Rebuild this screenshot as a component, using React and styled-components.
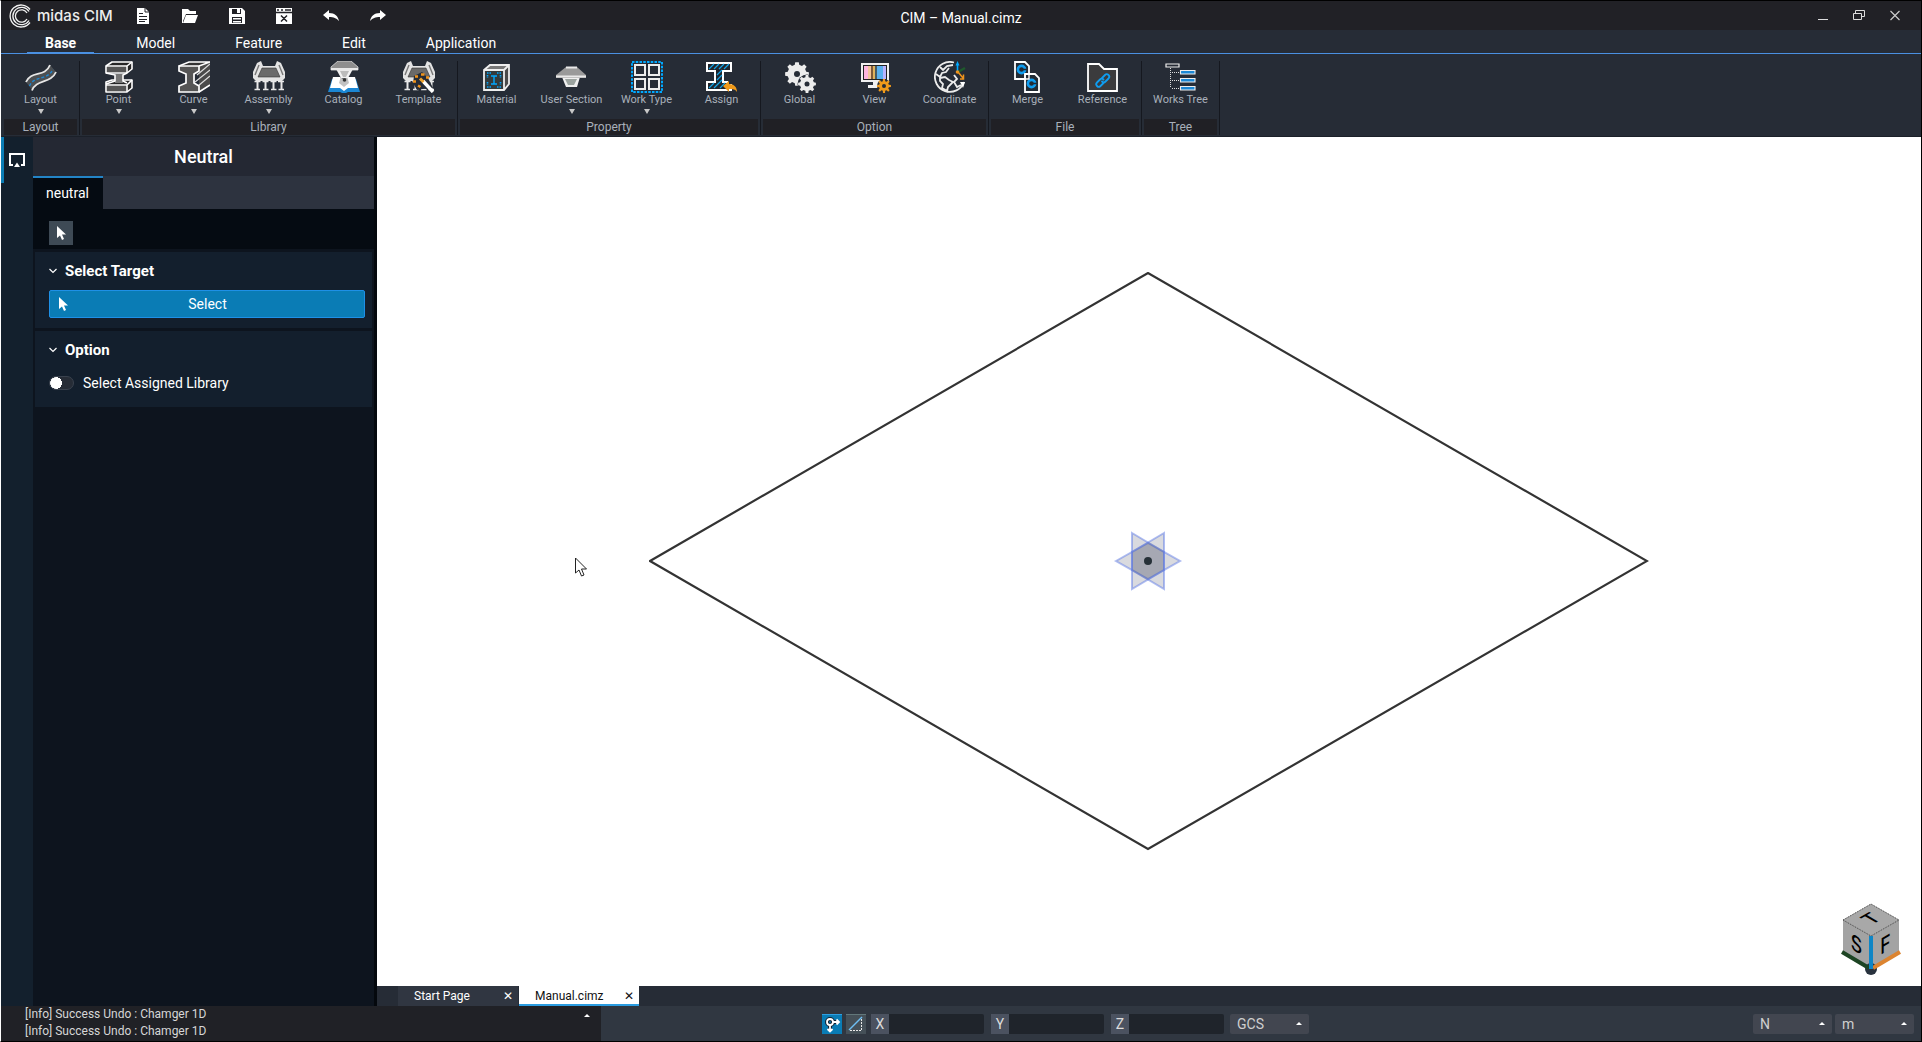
import React, { useState } from "react";
import styled, { createGlobalStyle } from "styled-components";

function gearPath(cx, cy, outer, inner, teeth) {
  const step = (Math.PI * 2) / teeth;
  const points = [];
  for (let i = 0; i < teeth; i++) {
    const a = i * step - Math.PI / 2;
    [
      [-0.3, inner],
      [-0.19, outer],
      [0.19, outer],
      [0.3, inner],
    ].forEach(([offset, r]) => {
      const t = a + offset * step;
      points.push(
        `${(cx + r * Math.cos(t)).toFixed(2)} ${(cy + r * Math.sin(t)).toFixed(2)}`
      );
    });
  }
  return `M${points.join("L")}Z`;
}

function Gear({ cx, cy, outer, inner, hole, teeth = 8, color }) {
  return (
    <>
      <path d={gearPath(cx, cy, outer, inner, teeth)} fill={color} />
      <circle cx={cx} cy={cy} r={hole} fill="#262c36" />
    </>
  );
}

// RIBBON DRAWINGS
function Deck() {
  return (
    <g>
      <path
        d="M0 11L4 2L8 0L10 5H22L24 0L28 2L32 11V17L29 20H3L0 17Z"
        fill="#e4e4e4"
      />
      <path d="M9 7H23L27 16H5Z" fill="#6a6a6a" stroke="#333" strokeWidth="0.6" />
      <path d="M6 4L2 14M26 4L30 14" stroke="#777" strokeWidth="1.4" />
      <path
        d="M4.5 20V28M12.5 20V28M20.5 20V28M28.5 20V28"
        stroke="#e8e8e8"
        strokeWidth="2"
      />
      <path
        d="M1.5 20.5H7.5M9.5 20.5H15.5M17.5 20.5H23.5M25 20.5H31M1.5 28.5H7M10 28.5H15.5M18 28.5H23.5M25.5 28.5H31"
        stroke="#e8e8e8"
        strokeWidth="1.4"
      />
    </g>
  );
}

const drawings = {
  layout: (
    <>
      <path d="M1 21C6 9 20 17 25 4L31 11C26 23 11 18 7 29Z" fill="#4c4f52" />
      <path
        d="M4.5 25C9 14 23 20 28 8"
        fill="none"
        stroke="#1f86cf"
        strokeWidth="1.4"
        strokeDasharray="3 2"
      />
      <path
        d="M1 21C6 9 20 17 25 4M7 29.500C11 18 26 23 31 11"
        fill="none"
        stroke="#e6e6e6"
        strokeWidth="1.8"
      />
    </>
  ),
  point: (
    <g stroke="#fff" strokeWidth="1.6" strokeLinejoin="round">
      <path d="M3 5L9 1H29V8L24 12H3Z" fill="#262626" />
      <path d="M3 21L9 19H29V27L24 31H3Z" fill="#262626" />
      <path d="M3 5H24L29 1M24 5V12" fill="none" />
      <path d="M3 24H24L29 19M24 24V31" fill="none" />
      <path d="M12 13H20V22H12Z" fill="#777" stroke="none" />
      <path d="M3 12L12 14V20L3 23M24 12L20 14V20L24 22" fill="none" />
      <path d="M4 6H23V11H4ZM4 25H23V30H4Z" fill="#555" stroke="none" />
    </g>
  ),
  curve: (
    <>
      <path d="M21 5L32 0V24L21 31Z" fill="#4a4a4a" />
      <path d="M1 5L11 1H32L21 5Z" fill="#333" />
      <path d="M19 14L32 3M17 21L32 9M20 25L32 15" stroke="#ddd" strokeWidth="1.2" />
      <path
        d="M1 5H21V10L16 13V22L21 25V31H1V25L8 22V13L1 10Z"
        fill="#555"
        stroke="#fff"
        strokeWidth="1.7"
      />
      <path d="M1 5L11 1H32M21 5L32 1M21 31L32 24" fill="none" stroke="#fff" strokeWidth="1.5" />
    </>
  ),
  assembly: <Deck />,
  catalog: (
    <>
      <path d="M4 18H28L32 31H20L16 33L12 31H0Z" fill="#1b87d4" />
      <path d="M5 16H12L16 19L20 16H27L30 27H20L16 30L12 27H2Z" fill="#fff" />
      <path d="M13 15H19L21 22L16 26L11 22Z" fill="#999" opacity="0.6" />
      <path d="M8 8H25L20 17H13Z" fill="#f2f2f2" />
      <path d="M12 10H21L18 16H15Z" fill="#bbb" />
      <path d="M10 0H23L30 6V9H3V6Z" fill="#8e8e8e" stroke="#ddd" strokeWidth="0.8" />
      <path d="M3 7H30V9H3Z" fill="#e8e8e8" />
      <circle cx="16.5" cy="19" r="1.8" fill="#333" />
    </>
  ),
  template: (
    <>
      <Deck />
      <path d="M11 15L19 11L25 17L30 27L20 28L14 29L10 22Z" fill="#262c36" />
      <path d="M20 20L30 31" stroke="#fff" strokeWidth="3.4" />
      <path d="M17 17.5L20.5 21" stroke="#f0a22a" strokeWidth="3" />
      <path
        d="M18 13.5H21.5M23 16.5H26M12 15.5H15M10 20.5H13M15 24.5L17.5 26"
        stroke="#f0941d"
        strokeWidth="2.6"
      />
    </>
  ),
  material: (
    <>
      <path d="M3 9L9 3H28V23L23 29H3Z" fill="#4a4a4a" />
      <path d="M3 9L9 3H28L23 9Z" fill="#777" />
      <path d="M3 9H23V29H3Z" fill="#333a3c" />
      <path
        d="M3 9L9 4H28V23L23 29H3ZM3 9H23V29M23 9L28 4"
        fill="none"
        stroke="#eee"
        strokeWidth="1.8"
      />
      <path
        d="M6 12H10M16 12H20M6 26H10M16 26H20M6.5 14V17M19.5 14V17M6.5 21V24M19.5 21V24"
        stroke="#00a8ff"
        strokeWidth="1.6"
        strokeDasharray="1.5 1"
      />
      <path d="M10 15H16M13 15V23M10 23H16" stroke="#00a8ff" strokeWidth="1.4" />
    </>
  ),
  section: (
    <>
      <path d="M6 16H24L21 26H10Z" fill="#efefef" />
      <path d="M9 18H21L18 24H12Z" fill="#9ba39f" />
      <path d="M10 6H21L30 14V17H0V14Z" fill="#9a9a9a" />
      <path d="M10 6.5H21M0 15.5H30" stroke="#e9e9e9" strokeWidth="2" />
    </>
  ),
  workType: (
    <g fill="none">
      <path d="M1 1H31V31H1Z" stroke="#00a8ff" strokeWidth="2" strokeDasharray="2.5 1.25" />
      <path
        d="M4 4H14V14H4ZM18 4H28V14H18ZM4 18H14V28H4ZM18 18H28V28H18Z"
        stroke="#ececec"
        strokeWidth="2"
      />
    </g>
  ),
  assign: (
    <>
      <path
        d="M1 2H25V10H17V21H25V29H1V21H9V10H1Z"
        fill="#20262d"
        stroke="#fff"
        strokeWidth="2"
      />
      <path
        d="M3 8L8 3M8 8L13 3M13 8L18 3M18 8L23 3M11 14L16 9M11 19L16 14M3 27L8 22M8 27L16 19M14 27L19 22"
        stroke="#12a5e8"
        strokeWidth="1.2"
      />
      <path d="M22 18H27V23H22Z" fill="#262c36" />
      <path
        d="M17 25L23 20V23C28 23 31 26 31 31C29 28 27 28 23 28V31Z"
        fill="#f09a1a"
      />
    </>
  ),
  global: (
    <>
      <Gear cx={13} cy={13} outer={12} inner={9.5} hole={3} color="#ececec" />
      <circle cx="23" cy="23" r="9.5" fill="#262c36" />
      <Gear cx={23} cy={23} outer={9} inner={7} hole={2.5} color="#ececec" />
    </>
  ),
  view: (
    <>
      <path d="M2 2H30V21H20V24H23V27H9V24H14V21H2Z" fill="#f0f0f0" />
      <path d="M4 4H28V19H4Z" fill="#222" />
      <path d="M5 5H9V18H5Z" fill="#ffb6df" />
      <path d="M9 5H12V18H9Z" fill="#f3c59b" />
      <path d="M12 5H14V18H12Z" fill="#7d5a3a" />
      <path d="M14 5H16V18H14Z" fill="#e0b35c" />
      <path d="M16 5H18V18H16Z" fill="#465b63" />
      <path d="M18 5H24V18H18Z" fill="#5ab0ee" />
      <path d="M24 5H27V18H24Z" fill="#b7b3ff" />
      <circle cx="25" cy="25" r="7" fill="#262c36" />
      <Gear cx={25} cy={25} outer={7} inner={5} hole={2} color="#f09a1a" />
    </>
  ),
  coordinate: (
    <>
      <path
        d="M20 1.5A15 15 0 1 0 30 21"
        fill="none"
        stroke="#ececec"
        strokeWidth="1.8"
      />
      <path
        d="M6 6L9 9L13 5L19 4M15 7L12 11L8 12L6 16L2 13M6 17L11 16L15 19L19 21L14 26L13 30L8 27L9 23L6 20ZM20 14L23 18L20 21L23 26L27 24"
        fill="none"
        stroke="#ececec"
        strokeWidth="1.8"
      />
      <path d="M26 21H31L29 27Z" fill="#fff" />
      <path d="M23.5 11V3" stroke="#00a8ff" strokeWidth="1.6" />
      <path d="M21.5 4.5L23.5 0L25.5 4.5Z" fill="#00a8ff" />
      <path d="M24 11L31 7" stroke="#1e5a2c" strokeWidth="2.4" />
      <path d="M24 11L29 17M29.5 13.5V18H26" stroke="#f0941d" strokeWidth="1.5" fill="none" />
      <circle cx="23.5" cy="11" r="1.8" fill="#f0941d" />
    </>
  ),
  merge: (
    <>
      <path d="M3 1H13L17 5V18H3Z" fill="#222b34" stroke="#fff" strokeWidth="1.8" />
      <path d="M13 13H23L27 17V31H13Z" fill="#222b34" stroke="#fff" strokeWidth="1.8" />
      <g fill="none" stroke="#0f9df0" strokeWidth="2.6">
        <circle cx="9.5" cy="8.5" r="3.6" />
        <circle cx="19.5" cy="22.5" r="3.6" />
      </g>
      <path d="M10 8.5H15M20 22.5H25" stroke="#222b34" strokeWidth="1.4" />
      <path d="M13 13H17V18H13Z" fill="none" stroke="#fff" strokeWidth="1.4" />
    </>
  ),
  reference: (
    <>
      <path d="M1 3H12L17 8H30V30H1Z" fill="#3b3b3d" stroke="#fff" strokeWidth="1.8" />
      <g fill="none" stroke="#0f9df0" strokeWidth="1.8" strokeLinecap="round">
        <path d="M15 17L18 14C19 13 20.5 13 21.5 14C22.5 15 22.5 16.5 21.5 17.5L18.5 20.5C17.5 21.5 16 21.5 15 20.5" />
        <path d="M16.5 22L13.5 25C12.5 26 11 26 10 25C9 24 9 22.5 10 21.5L13 18.5C14 17.5 15.5 17.5 16.5 18.5" />
      </g>
    </>
  ),
  tree: (
    <>
      <path d="M1 3H14V6H1Z" fill="none" stroke="#eee" strokeWidth="1.2" />
      <path
        d="M5.5 7V27M7 11.5H14M7 19.5H14M7 27.5H14"
        stroke="#ddd"
        strokeDasharray="1 1"
      />
      <path
        d="M15.5 9.5H30V13H15.5ZM15.5 17.5H30V21H15.5ZM15.5 25.5H30V29H15.5Z"
        fill="#1b87d4"
        stroke="#eee"
        strokeWidth="1.1"
      />
    </>
  ),
};

const groups = [
  { name: "Layout", tools: [["Layout", "layout", true]] },
  {
    name: "Library",
    tools: [
      ["Point", "point", true],
      ["Curve", "curve", true],
      ["Assembly", "assembly", true],
      ["Catalog", "catalog"],
      ["Template", "template"],
    ],
  },
  {
    name: "Property",
    tools: [
      ["Material", "material"],
      ["User Section", "section", true],
      ["Work Type", "workType", true],
      ["Assign", "assign"],
    ],
  },
  {
    name: "Option",
    tools: [
      ["Global", "global"],
      ["View", "view"],
      ["Coordinate", "coordinate"],
    ],
  },
  {
    name: "File",
    tools: [
      ["Merge", "merge"],
      ["Reference", "reference"],
    ],
  },
  { name: "Tree", tools: [["Works Tree", "tree"]] },
];

const quickActions = [
  [
    "New",
    <>
      <path d="M2 0H10L14 4V16H2Z" fill="#fff" />
      <path
        d="M10 0V4H14M4 5.5H8M4 8.5H12M4 11.5H12M4 13.5H10"
        stroke="#212126"
        fill="none"
      />
    </>,
  ],
  [
    "Open",
    <>
      <path d="M0 1H6L8 3H14V6H4L1 13V15H0Z" fill="#fff" />
      <path d="M4 7H16L13 15H1Z" fill="#fff" />
    </>,
  ],
  [
    "Save",
    <>
      <path d="M0 0H13L16 3V16H0Z" fill="#fff" />
      <path d="M3 1H12V6H3ZM3 9H13V15H3Z" fill="#212126" />
      <path d="M8 1H11V5H8ZM4 10H12V11.5H4ZM4 13H12V14.5H4Z" fill="#fff" />
    </>,
  ],
  [
    "Close file",
    <>
      <path d="M0 0H16V16H0Z" fill="#fff" />
      <path
        d="M1 2H3M5 2H7M9 2H15M0 4.5H16M5 7.5L11 13.5M11 7.5L5 13.5"
        stroke="#212126"
        strokeWidth="1.5"
      />
    </>,
  ],
  ["Undo", <path d="M0 7L6 2V5C12 5 15 8 16 13C13 10 11 9 6 9V12Z" fill="#fff" />],
  ["Redo", <path d="M16 7L10 2V5C4 5 1 8 0 13C3 10 5 9 10 9V12Z" fill="#fff" />],
];

const menus = ["Base", "Model", "Feature", "Edit", "Application"];
const axes = ["X", "Y", "Z"];

function Pointer() {
  return (
    <svg width="16" height="16" viewBox="0 0 16 16" aria-hidden="true">
      <path d="M4 1V13L7 10.5L9 15L11 14L9 9.5H13Z" fill="#fff" />
    </svg>
  );
}

function Chevron() {
  return (
    <svg width="8" height="6" viewBox="0 0 8 6" aria-hidden="true">
      <path d="M0.5 1L4 4.5L7.5 1" fill="none" stroke="#fff" strokeWidth="1.2" />
    </svg>
  );
}

function Picker({ label, options }) {
  return (
    <StyledPicker>
      <select aria-label={label}>
        {options.map((option) => (
          <option key={option}>{option}</option>
        ))}
      </select>
      <UpMark />
    </StyledPicker>
  );
}

function TitleBar() {
  return (
    <StyledTitleBar>
      <TitleLeft>
        <Brand>
          <svg width="22" height="24" viewBox="0 0 22 24" aria-hidden="true">
            <g fill="none" stroke="#f2f2f2" strokeWidth="1.3">
              <path d="M21 5.5A11 11 0 1 0 21 18.5" />
              <path d="M20 7.5A8.7 8.7 0 1 0 20 16.5" />
              <path d="M18 9A6.2 6.2 0 1 0 18 15" />
            </g>
          </svg>
          <span>midas CIM</span>
        </Brand>
        <QuickActions>
          {quickActions.map(([name, drawing]) => (
            <IconButton key={name} aria-label={name}>
              <svg width="16" height="16" viewBox="0 0 16 16" aria-hidden="true">
                {drawing}
              </svg>
            </IconButton>
          ))}
        </QuickActions>
      </TitleLeft>
      <h1>CIM – Manual.cimz</h1>
      <WindowControls>
        <IconButton aria-label="Minimize">
          <svg width="12" height="12" viewBox="0 0 12 12">
            <path d="M1 9.5H11" stroke="#ddd" />
          </svg>
        </IconButton>
        <IconButton aria-label="Restore">
          <svg width="12" height="12" viewBox="0 0 12 12">
            <path
              d="M0.5 3.5H8.5V9.5H0.5ZM2.5 3V0.5H11.5V6.5H9"
              fill="none"
              stroke="#ddd"
            />
          </svg>
        </IconButton>
        <IconButton aria-label="Close">
          <svg width="12" height="12" viewBox="0 0 12 12">
            <path
              d="M1.5 1L10.5 10M10.5 1L1.5 10"
              stroke="#ccc"
              strokeWidth="1.2"
            />
          </svg>
        </IconButton>
      </WindowControls>
    </StyledTitleBar>
  );
}

function Ribbon() {
  return (
    <StyledRibbon>
      {groups.map((group) => (
        <RibbonGroup key={group.name}>
          <Tools>
            {group.tools.map(([name, icon, hasMenu]) => (
              <Tool key={name}>
                <svg width="32" height="32" viewBox="0 0 32 32" aria-hidden="true">
                  {drawings[icon]}
                </svg>
                <span>{name}</span>
                {hasMenu && <DownMark />}
              </Tool>
            ))}
          </Tools>
          <GroupName>{group.name}</GroupName>
        </RibbonGroup>
      ))}
    </StyledRibbon>
  );
}

function SidePanel() {
  const [assigned, setAssigned] = useState(false);
  return (
    <Panel>
      <h2>Neutral</h2>
      <PanelTabs>
        <button>neutral</button>
      </PanelTabs>
      <PanelTools>
        <button aria-label="Pick">
          <Pointer />
        </button>
      </PanelTools>
      <Section>
        <h3>
          <Chevron />
          Select Target
        </h3>
        <SelectButton>
          <Pointer />
          <span>Select</span>
        </SelectButton>
      </Section>
      <Section>
        <h3>
          <Chevron />
          Option
        </h3>
        <SwitchRow>
          <input
            type="checkbox"
            checked={assigned}
            onChange={(e) => setAssigned(e.target.checked)}
          />
          Select Assigned Library
        </SwitchRow>
      </Section>
    </Panel>
  );
}

function Viewport() {
  return (
    <StyledViewport>
      <svg width="1000" height="580" viewBox="-500 -289 1000 580" aria-hidden="true">
        <path
          d="M-499 0L-1 -288L498 0L-1 288Z"
          fill="none"
          stroke="#333"
          strokeWidth="2.2"
        />
        <g
          fill="#5f6478"
          fillOpacity="0.24"
          stroke="#5f7be6"
          strokeOpacity="0.5"
          strokeWidth="2"
        >
          <path d="M-33 0L-1 -18L31 0L-1 18Z" />
          <path d="M-17 -28L15 -9V28L-17 9Z" />
          <path d="M15 -28L-17 -9V28L15 9Z" />
        </g>
        <circle cx="-1" cy="0" r="4" fill="#263038" />
      </svg>
      <Cursor width="12" height="20" viewBox="0 0 12 20">
        <path
          d="M0.5 1V16L4 13L6.5 19L9 18L6.5 12H11.5Z"
          fill="#fff"
          stroke="#222"
        />
      </Cursor>
      <ViewCube width="60" height="74" viewBox="0 0 60 74">
        <path d="M30 1L58 17V50L30 66L2 50V17Z" fill="#a3a3a3" />
        <path
          d="M2 17L30 1L58 17L30 33Z"
          fill="#a8a8a8"
          stroke="#444"
          strokeDasharray="1 1"
        />
        <circle cx="30" cy="66" r="6" fill="#28323e" />
        <path d="M1 49L28 65" stroke="#1d4423" strokeWidth="4" />
        <path d="M59 49L32 65" stroke="#dc8430" strokeWidth="4" />
        <path d="M30 33V66" stroke="#0e86c6" strokeWidth="4" />
        <g fontFamily="Inter, sans-serif" fontWeight="500" textAnchor="middle">
          <text fontSize="22" transform="matrix(0.8 0.46 0 1 15.5 49)">
            S
          </text>
          <text fontSize="22" transform="matrix(0.8 -0.46 0 1 44.5 49)">
            F
          </text>
          <text fontSize="20" transform="matrix(0.87 -0.5 0.87 0.5 36 19)">
            T
          </text>
        </g>
      </ViewCube>
    </StyledViewport>
  );
}

function StatusBar() {
  return (
    <StyledStatus>
      <Log>
        <div>
          <p>[Info] Success Undo : Chamger 1D</p>
          <p>[Info] Success Undo : Chamger 1D</p>
        </div>
        <button aria-label="Expand log">
          <UpMark />
        </button>
      </Log>
      <Coordinates>
        <SnapButton $active aria-label="Snap">
          <svg width="20" height="20" viewBox="0 0 20 20">
            <g fill="none" stroke="#123" strokeWidth="4">
              <circle cx="8" cy="7" r="3" />
              <path d="M11 7H16M8 10V16" />
            </g>
            <g fill="none" stroke="#fff" strokeWidth="1.8">
              <circle cx="8" cy="7" r="3" />
              <path d="M11 7H17M14.5 4.5L17 7L14.5 9.5M8 10V17M5.5 14L8 16.5L10.5 14" />
            </g>
          </svg>
        </SnapButton>
        <SnapButton aria-label="Slope">
          <svg width="20" height="20" viewBox="0 0 20 20">
            <path d="M3 15L16 2" stroke="#6fc0f5" strokeWidth="1.4" />
            <path
              d="M15.5 4V15.500M4 15.5H15"
              stroke="#e8e8e8"
              strokeDasharray="2 1"
            />
          </svg>
        </SnapButton>
        <Axes>
          {axes.map((axis) => (
            <AxisField key={axis}>
              <span>{axis}</span>
              <input type="text" />
            </AxisField>
          ))}
        </Axes>
        <Picker label="Coordinate system" options={["GCS", "UCS"]} />
      </Coordinates>
      <Units>
        <Picker label="Force unit" options={["N", "kN"]} />
        <Picker label="Length unit" options={["m", "mm"]} />
      </Units>
    </StyledStatus>
  );
}

function App() {
  return (
    <>
      <GlobalStyle />
      <Shell>
        <TitleBar />
        <Menu>
          {menus.map((menu, i) => (
            <MenuTab key={menu} $active={i === 0}>
              {menu}
            </MenuTab>
          ))}
        </Menu>
        <Ribbon />
        <Workspace>
          <Rail>
            <button aria-label="Neutral panel">
              <svg width="18" height="16" viewBox="0 0 18 16">
                <path
                  d="M5 13H2V2H16V13H13"
                  fill="none"
                  stroke="#fff"
                  strokeWidth="2"
                />
                <path d="M9 10.5L12 15H6Z" fill="#fff" />
              </svg>
            </button>
          </Rail>
          <SidePanel />
          <Main>
            <Viewport />
            <Documents>
              <DocumentTab>
                <button>Start Page</button>
                <button aria-label="Close Start Page">✕</button>
              </DocumentTab>
              <DocumentTab $active>
                <button>Manual.cimz</button>
                <button aria-label="Close Manual.cimz">✕</button>
              </DocumentTab>
            </Documents>
          </Main>
        </Workspace>
        <StatusBar />
      </Shell>
    </>
  );
}

// STYLE COMPONENTS
const GlobalStyle = createGlobalStyle`
  * {
    margin: 0;
    padding: 0;
    box-sizing: border-box;
  }
  body {
    font-family: Roboto, "Noto Sans", sans-serif;
    font-size: 14px;
    color: #fff;
    background: #0d141e;
  }
  button, input, select {
    font: inherit;
    color: inherit;
    background: none;
    border: none;
  }
  button {
    cursor: pointer;
  }
  svg {
    display: block;
    flex-shrink: 0;
  }
`;

const Shell = styled.div`
  display: flex;
  flex-direction: column;
  height: 100vh;
  border: 1px solid #000;
  border-left-color: #fff;
  overflow: hidden;
`;

const StyledTitleBar = styled.header`
  display: grid;
  grid-template-columns: 1fr auto 1fr;
  align-items: center;
  height: 29px;
  flex-shrink: 0;
  background: #212126;
  h1 {
    padding-top: 4px;
    font-size: 14px;
    font-weight: normal;
  }
`;

const TitleLeft = styled.div`
  display: flex;
  align-items: center;
  gap: 22px;
`;

const Brand = styled.div`
  display: flex;
  align-items: center;
  gap: 6px;
  padding-left: 8px;
  color: #ededed;
  font: 500 15px Inter, sans-serif;
`;

const IconButton = styled.button`
  display: flex;
  justify-content: center;
`;

const QuickActions = styled.nav`
  display: flex;
  gap: 31px;
`;

const WindowControls = styled.div`
  display: flex;
  justify-content: flex-end;
  gap: 24px;
  padding-right: 20px;
`;

const Menu = styled.nav`
  display: flex;
  gap: 24px;
  height: 24px;
  flex-shrink: 0;
  padding-left: 26px;
  background: #262c36;
  border-bottom: 1px solid #4a90e2;
`;

const MenuTab = styled.button`
  padding: 4px 18px 0;
  border-bottom: 1px solid ${({ $active }) => ($active ? "#4a90e2" : "transparent")};
  font-weight: ${({ $active }) => ($active ? 700 : 400)};
`;

const StyledRibbon = styled.div`
  display: flex;
  flex-shrink: 0;
  height: 83px;
  padding: 7px 3px 1px;
  background: #262c36;
  border-bottom: 1px solid #1b2029;
`;

const RibbonGroup = styled.section`
  display: flex;
  flex-direction: column;
  justify-content: space-between;
  padding-right: 2px;
  margin-right: 2px;
  border-right: 1px solid #15181f;
`;

const Tools = styled.div`
  display: flex;
  gap: 2px;
`;

const Tool = styled.button`
  display: flex;
  flex-direction: column;
  align-items: center;
  width: 73px;
  color: #a9b0ba;
  font-size: 11px;
  line-height: 14px;
`;

const DownMark = styled.i`
  margin-top: 2px;
  border: 3px solid transparent;
  border-top: 5px solid #c8c8c8;
  border-bottom: none;
`;

const UpMark = styled.i`
  border: 3px solid transparent;
  border-bottom: 3px solid #fff;
  border-top: none;
`;

const GroupName = styled.div`
  height: 16px;
  background: #202025;
  color: #a9b0ba;
  font-size: 12px;
  line-height: 16px;
  text-align: center;
`;

const Workspace = styled.div`
  display: flex;
  flex: 1;
  min-height: 0;
`;

const Rail = styled.nav`
  width: 32px;
  background: #13202d;
  button {
    display: flex;
    align-items: center;
    width: 100%;
    height: 46px;
    padding-left: 4px;
    border-left: 3px solid #0b7db5;
  }
`;

const Panel = styled.aside`
  width: 344px;
  background: #0d141e;
  border-right: 3px solid #04080d;
  h2 {
    height: 39px;
    background: #242833;
    font-size: 18px;
    font-weight: 500;
    line-height: 39px;
    text-align: center;
  }
`;

const PanelTabs = styled.div`
  height: 33px;
  background: #2d333f;
  button {
    height: 33px;
    padding: 0 14px 2px 13px;
    background: #050b12;
    border-top: 2px solid #2384c6;
  }
`;

const PanelTools = styled.div`
  padding: 12px 16px 4px;
  height: 40px;
  background: #050b12;
  button {
    display: grid;
    place-items: center;
    width: 24px;
    height: 24px;
    background: #3e4a55;
  }
`;

const Section = styled.section`
  height: 76px;
  margin: 3px 2px 0;
  padding: 10px 7px 0 14px;
  background: #131f2d;
  h3 {
    display: flex;
    align-items: center;
    gap: 8px;
    font-size: 15px;
    line-height: 18px;
  }
`;

const SelectButton = styled.button`
  display: flex;
  align-items: center;
  width: 100%;
  height: 28px;
  margin-top: 10px;
  padding: 0 20px 0 5px;
  background: #0a7cb5;
  border: 1px solid #1e90e6;
  border-radius: 2px;
  span {
    flex: 1;
  }
`;

const SwitchRow = styled.label`
  display: flex;
  align-items: center;
  gap: 9px;
  margin-top: 16px;
  line-height: 16px;
  input {
    appearance: none;
    width: 25px;
    height: 14px;
    border: 1px solid #3a424e;
    border-radius: 7px;
    background: radial-gradient(circle at 6px 6px, #fff 6px, #262c36 6px);
  }
  input:checked {
    background: radial-gradient(circle at 17px 6px, #fff 6px, #0a7cb5 6px);
  }
`;

const Main = styled.main`
  display: flex;
  flex-direction: column;
  flex: 1;
  min-width: 0;
`;

const StyledViewport = styled.div`
  position: relative;
  display: grid;
  place-items: center;
  flex: 1;
  min-height: 0;
  background: #fff;
`;

const Cursor = styled.svg`
  position: absolute;
  left: 198px;
  top: 420px;
`;

const ViewCube = styled.svg`
  position: absolute;
  right: 20px;
  bottom: 9px;
`;

const Documents = styled.div`
  display: flex;
  gap: 1px;
  height: 20px;
  flex-shrink: 0;
  padding-left: 21px;
  background: #262c36;
`;

const DocumentTab = styled.div`
  display: flex;
  align-items: center;
  justify-content: space-between;
  width: 120px;
  padding: 2px 5px 0 16px;
  font-size: 12px;
  color: ${({ $active }) => ($active ? "#111" : "#fff")};
  background: ${({ $active }) => ($active ? "#fff" : "#303641")};
  border-bottom: 2px solid ${({ $active }) => ($active ? "#2b9ce0" : "#303641")};
`;

const StyledStatus = styled.footer`
  display: flex;
  flex-shrink: 0;
  height: 35px;
  background: #303741;
`;

const Log = styled.div`
  display: flex;
  justify-content: space-between;
  align-items: flex-start;
  width: 600px;
  padding: 0 11px 0 24px;
  background: #202126;
  color: #d6d6d6;
  font-size: 12px;
  line-height: 17px;
  button {
    display: flex;
    padding-top: 8px;
  }
`;

const Coordinates = styled.div`
  display: flex;
  align-items: center;
  gap: 4px;
  padding: 0 6px 0 221px;
`;

const SnapButton = styled.button`
  width: 20px;
  height: 20px;
  background: ${({ $active }) => ($active ? "#0a7cb5" : "#455058")};
  border-top: 1px solid ${({ $active }) => ($active ? "#2f9fe0" : "#62777a")};
`;

const Axes = styled.div`
  display: flex;
  gap: 7px;
  padding: 0 2px 0 1px;
`;

const AxisField = styled.label`
  display: flex;
  width: 113px;
  height: 20px;
  color: #dcdcdc;
  line-height: 20px;
  span {
    width: 18px;
    background: #4b5260;
    text-align: center;
  }
  input {
    flex: 1;
    min-width: 0;
    padding: 0 4px;
    background: #1f242b;
    border-radius: 0 2px 2px 0;
  }
`;

const StyledPicker = styled.div`
  display: flex;
  align-items: center;
  width: 79px;
  height: 20px;
  padding-right: 7px;
  background: #424650;
  border-radius: 2px;
  color: #cfcfcf;
  select {
    flex: 1;
    min-width: 0;
    padding-left: 7px;
    appearance: none;
  }
`;

const Units = styled.div`
  display: flex;
  align-items: center;
  gap: 3px;
  margin-left: auto;
  padding-right: 7px;
`;

export default App;
